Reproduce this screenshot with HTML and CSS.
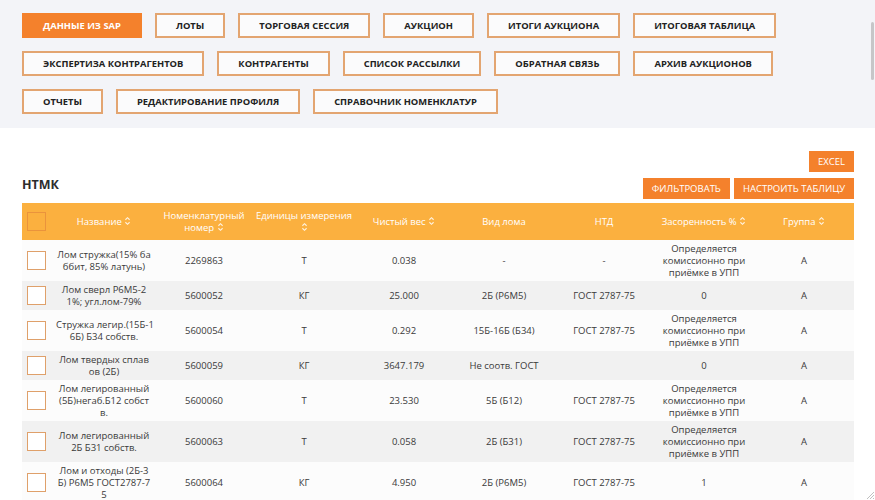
FILE: index.html
```html
<!DOCTYPE html>
<html lang="ru">
<head>
<meta charset="utf-8">
<link rel="stylesheet" href="styles.css">
</head>
<body>
<div class="nav">
  <div class="nav-row">
    <a class="nbtn active">ДАННЫЕ ИЗ SAP</a>
    <a class="nbtn">ЛОТЫ</a>
    <a class="nbtn">ТОРГОВАЯ СЕССИЯ</a>
    <a class="nbtn">АУКЦИОН</a>
    <a class="nbtn">ИТОГИ АУКЦИОНА</a>
    <a class="nbtn">ИТОГОВАЯ ТАБЛИЦА</a>
  </div>
  <div class="nav-row">
    <a class="nbtn">ЭКСПЕРТИЗА КОНТРАГЕНТОВ</a>
    <a class="nbtn">КОНТРАГЕНТЫ</a>
    <a class="nbtn">СПИСОК РАССЫЛКИ</a>
    <a class="nbtn">ОБРАТНАЯ СВЯЗЬ</a>
    <a class="nbtn">АРХИВ АУКЦИОНОВ</a>
  </div>
  <div class="nav-row">
    <a class="nbtn">ОТЧЕТЫ</a>
    <a class="nbtn">РЕДАКТИРОВАНИЕ ПРОФИЛЯ</a>
    <a class="nbtn">СПРАВОЧНИК НОМЕНКЛАТУР</a>
  </div>
</div>
<div class="scroll-thumb"></div>
<div class="content">
  <div class="excel-row"><a class="obtn">EXCEL</a></div>
  <div class="title-row">
    <h2 class="title">НТМК</h2>
    <div class="actions"><a class="obtn">ФИЛЬТРОВАТЬ</a><a class="obtn">НАСТРОИТЬ ТАБЛИЦУ</a></div>
  </div>
  <table class="grid">
    <colgroup>
      <col class="c-cb"><col class="c-data"><col class="c-data"><col class="c-data"><col class="c-data"><col class="c-data"><col class="c-data"><col class="c-data"><col class="c-data">
    </colgroup>
    <thead>
      <tr>
        <th class="cb-cell"><span class="cb cb-head"></span></th>
        <th>Название <svg class="sort" viewBox="0 0 8 12"><path d="M1.5 4.5 4 2l2.5 2.5M1.5 7.5 4 10l2.5-2.5"/></svg></th>
        <th>Номенклатурный<br>номер <svg class="sort" viewBox="0 0 8 12"><path d="M1.5 4.5 4 2l2.5 2.5M1.5 7.5 4 10l2.5-2.5"/></svg></th>
        <th>Единицы измерения<br><svg class="sort" viewBox="0 0 8 12"><path d="M1.5 4.5 4 2l2.5 2.5M1.5 7.5 4 10l2.5-2.5"/></svg></th>
        <th>Чистый вес <svg class="sort" viewBox="0 0 8 12"><path d="M1.5 4.5 4 2l2.5 2.5M1.5 7.5 4 10l2.5-2.5"/></svg></th>
        <th>Вид лома</th>
        <th>НТД</th>
        <th>Засоренность % <svg class="sort" viewBox="0 0 8 12"><path d="M1.5 4.5 4 2l2.5 2.5M1.5 7.5 4 10l2.5-2.5"/></svg></th>
        <th>Группа <svg class="sort" viewBox="0 0 8 12"><path d="M1.5 4.5 4 2l2.5 2.5M1.5 7.5 4 10l2.5-2.5"/></svg></th>
      </tr>
    </thead>
    <tbody>
      <tr>
        <td class="cb-cell"><span class="cb"></span></td>
        <td class="name">Лом стружка(15% ба<br>ббит, 85% латунь)</td>
        <td>2269863</td><td>Т</td><td>0.038</td><td>-</td><td>-</td>
        <td>Определяется комиссионно при приёмке в УПП</td><td>А</td>
      </tr>
      <tr>
        <td class="cb-cell"><span class="cb"></span></td>
        <td class="name">Лом сверл Р6М5-2<br>1%; угл.лом-79%</td>
        <td>5600052</td><td>КГ</td><td>25.000</td><td>2Б (Р6М5)</td><td>ГОСТ 2787-75</td>
        <td>0</td><td>А</td>
      </tr>
      <tr>
        <td class="cb-cell"><span class="cb"></span></td>
        <td class="name">Стружка легир.(15Б-1<br>6Б) Б34 собств.</td>
        <td>5600054</td><td>Т</td><td>0.292</td><td>15Б-16Б (Б34)</td><td>ГОСТ 2787-75</td>
        <td>Определяется комиссионно при приёмке в УПП</td><td>А</td>
      </tr>
      <tr>
        <td class="cb-cell"><span class="cb"></span></td>
        <td class="name">Лом твердых сплав<br>ов (2Б)</td>
        <td>5600059</td><td>КГ</td><td>3647.179</td><td>Не соотв. ГОСТ</td><td></td>
        <td>0</td><td>А</td>
      </tr>
      <tr>
        <td class="cb-cell"><span class="cb"></span></td>
        <td class="name">Лом легированный<br>(5Б)негаб.Б12 собст<br>в.</td>
        <td>5600060</td><td>Т</td><td>23.530</td><td>5Б (Б12)</td><td>ГОСТ 2787-75</td>
        <td>Определяется комиссионно при приёмке в УПП</td><td>А</td>
      </tr>
      <tr>
        <td class="cb-cell"><span class="cb"></span></td>
        <td class="name">Лом легированный<br>2Б Б31 собств.</td>
        <td>5600063</td><td>Т</td><td>0.058</td><td>2Б (Б31)</td><td>ГОСТ 2787-75</td>
        <td>Определяется комиссионно при приёмке в УПП</td><td>А</td>
      </tr>
      <tr>
        <td class="cb-cell"><span class="cb"></span></td>
        <td class="name">Лом и отходы (2Б-3<br>Б) Р6М5 ГОСТ2787-7<br>5</td>
        <td>5600064</td><td>КГ</td><td>4.950</td><td>2Б (Р6М5)</td><td>ГОСТ 2787-75</td>
        <td>1</td><td>А</td>
      </tr>
      <tr class="spacer"><td colspan="9"></td></tr>
    </tbody>
  </table>
</div>
<svg class="resize" viewBox="0 0 8 8"><path d="M8 1 1 8M8 4 4 8M8 7 7 8"/></svg>
</body>
</html>
```

FILE: styles.css
```css
* { box-sizing: border-box; }
html, body { margin: 0; padding: 0; }
body {
  font-family: "Open Sans", "Liberation Sans", sans-serif;
  color: #333;
  background: #fff;
  width: 875px;
  height: 500px;
  overflow: hidden;
  position: relative;
}
.nav {
  background: #f3f4f8;
  padding: 13px 22px 13px;
  display: flex;
  flex-direction: column;
  gap: 13px;
  height: 128px;
}
.nav-row { display: flex; gap: 13px; }
.nbtn {
  display: flex;
  align-items: center;
  justify-content: center;
  height: 25px;
  padding: 0 19px;
  border: 2px solid #e3a571;
  background: #fbfbfc;
  color: #222;
  font-weight: 700;
  font-size: 9.4px;
  white-space: nowrap;
}
.nbtn.active {
  background: #f4812c;
  border-color: #f4812c;
  color: #fff;
}
.scroll-thumb {
  position: absolute;
  right: 1px;
  top: 22px;
  width: 3px;
  height: 58px;
  border-radius: 2px;
  background: #c6c6c8;
}
.content {
  padding: 23px 21px 0 22px;
}
.excel-row { display: flex; justify-content: flex-end; }
.obtn {
  display: inline-flex;
  align-items: center;
  justify-content: center;
  height: 21px;
  padding: 0 9px;
  background: #f4812c;
  color: #fff;
  font-size: 9.5px;
  white-space: nowrap;
}
.title-row {
  display: flex;
  justify-content: space-between;
  align-items: flex-end;
  margin-top: 4px;
  margin-bottom: 4px;
}
.title {
  margin: 0 0 6px;
  font-size: 12.5px;
  font-weight: 700;
  color: #2d2d2d;
}
.actions { display: flex; gap: 4px; }
.grid {
  width: 832px;
  table-layout: fixed;
  border-collapse: collapse;
}
.c-cb { width: 32px; }
.c-data { width: 100px; }
.grid th {
  background: #fbb03f;
  color: #fff;
  font-weight: 400;
  font-size: 9.5px;
  line-height: 12px;
  height: 37px;
  padding: 0 2px;
  text-align: center;
  vertical-align: middle;
  white-space: nowrap;
}
.sort {
  width: 7px;
  height: 10px;
  vertical-align: -1px;
  fill: none;
  stroke: #fff;
  stroke-opacity: 0.85;
  stroke-width: 1.3;
}
.grid td {
  font-size: 9.5px;
  line-height: 12px;
  color: #3a3a3a;
  padding: 3px 4px 2px;
  text-align: center;
  vertical-align: middle;
}
.grid tbody tr:nth-child(odd) { background: #fcfcfc; }
.grid tbody tr:nth-child(even) { background: #f1f1f1; }
.grid td.name { white-space: nowrap; padding: 3px 2px 2px; }
.grid tr.spacer td { height: 10px; padding: 0; }
.cb-cell { padding: 0 0 0 5px !important; text-align: left !important; }
.cb {
  display: block;
  width: 19px;
  height: 19px;
  border: 1.5px solid #dfa06a;
  background: #fff;
}
.cb-head {
  background: transparent;
  border-color: #ea933c;
}
.resize {
  position: absolute;
  right: 1px;
  bottom: 1px;
  width: 8px;
  height: 8px;
  stroke: #b0b0b0;
  stroke-width: 0.8;
}
```
